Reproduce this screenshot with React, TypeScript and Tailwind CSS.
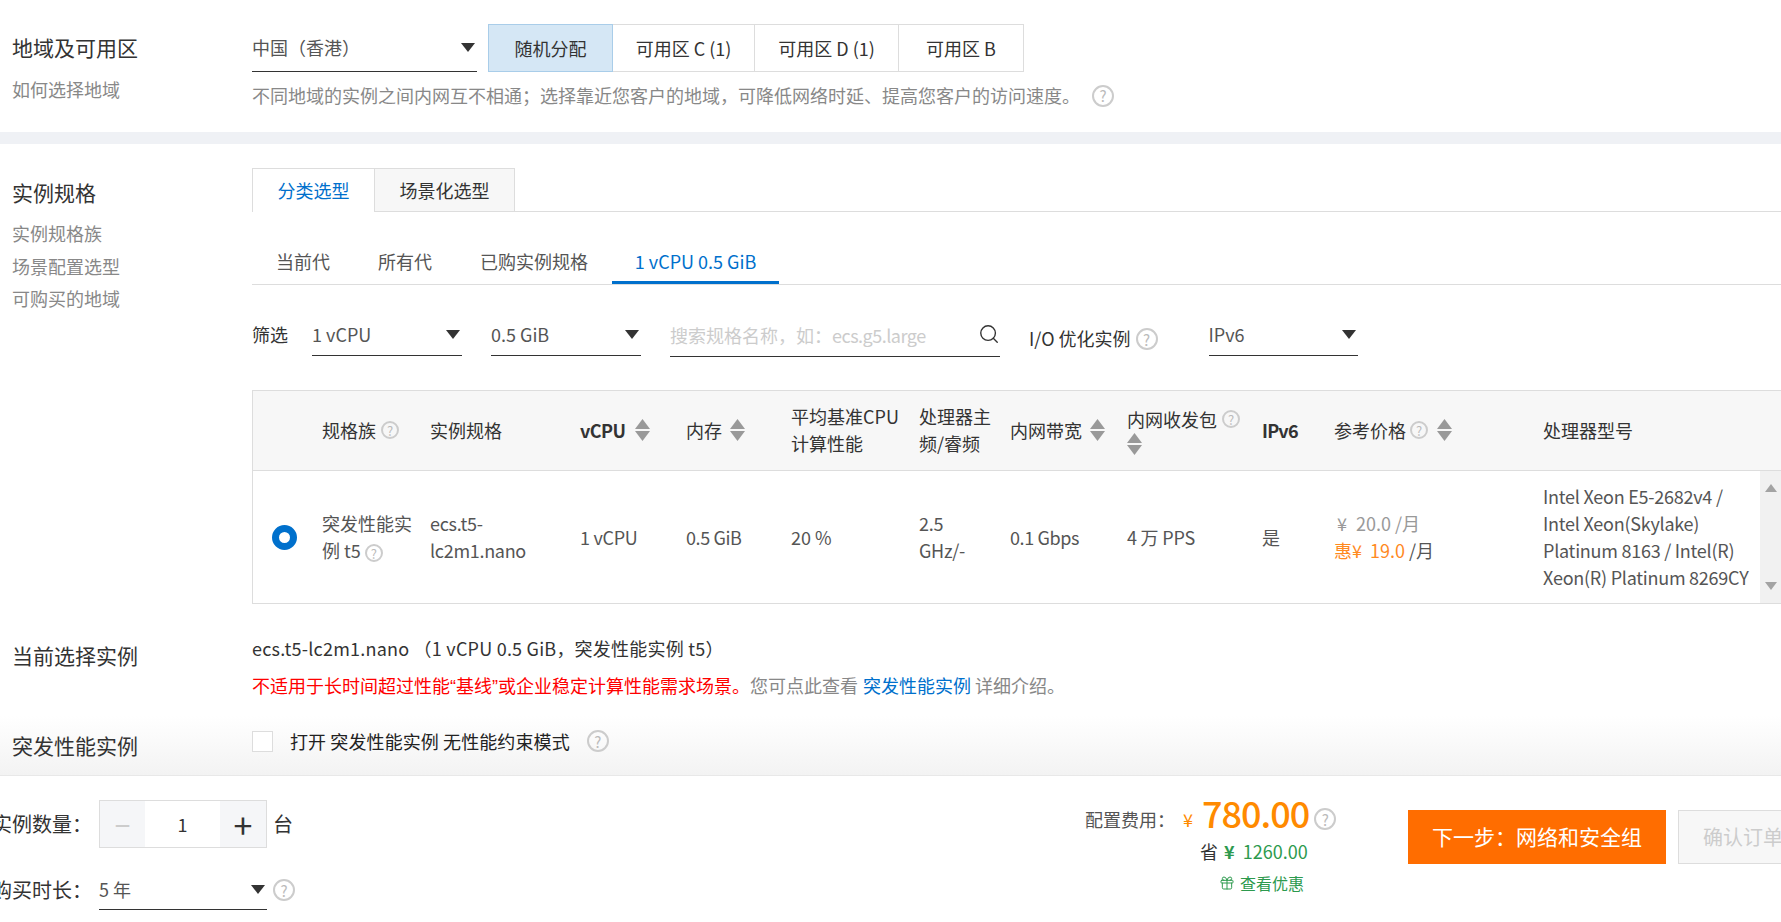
import { Gift, Search } from "lucide-react";

const tableCols =
  "grid grid-cols-[69px_108px_150px_106px_105px_128px_91px_117px_135px_72px_209px_217px_21px]";

function Help({ className = "w-[18px] h-[18px] text-[13px]" }: { className?: string }) {
  return (
    <span
      className={`${className} inline-flex shrink-0 items-center justify-center rounded-full border-2 border-[#ccc] text-[#bbb] leading-none align-middle`}
    >
      ?
    </span>
  );
}

function Caret({ className = "w-[14px] h-[9px]" }: { className?: string }) {
  return (
    <svg viewBox="0 0 14 9" className={`${className} shrink-0 fill-[#333]`}>
      <path d="M0 0h14L7 9z" />
    </svg>
  );
}

function Sort() {
  return (
    <svg viewBox="0 0 15 22" className="w-[15px] h-[22px] shrink-0 fill-[#999]">
      <path d="M7.5 0L15 10H0z" />
      <path d="M0 12h15L7.5 22z" />
    </svg>
  );
}

function Select({ value, className }: { value: string; className: string }) {
  return (
    <div className={`${className} flex items-center justify-between border-b border-[#333] pr-[2px] text-[#555]`}>
      <span>{value}</span>
      <Caret />
    </div>
  );
}

function Zone({ label, className }: { label: string; className: string }) {
  return <div className={`${className} flex items-center justify-center border-y border-r border-[#ddd]`}>{label}</div>;
}

export default function App() {
  return (
    <div className="w-[1781px] h-[922px] overflow-hidden bg-white text-[18px] text-[#333] font-['Noto_Sans_CJK_SC',sans-serif]">
      {/* 地域 */}
      <section className="flex h-[132px] pt-[24px]">
        <div className="w-[252px] pl-[12px]">
          <h2 className="text-[21px] leading-[46px]">地域及可用区</h2>
          <p className="mt-[6px] text-[#888]">如何选择地域</p>
        </div>
        <div>
          <div className="flex h-[48px]">
            <Select value="中国（香港）" className="w-[225px] mr-[11px] pb-[1px]" />
            <div className="flex w-[125px] items-center justify-center border border-[#a9cde9] bg-[#d5e7f5]">随机分配</div>
            <Zone label="可用区 C (1)" className="w-[142px]" />
            <Zone label="可用区 D (1)" className="w-[144px]" />
            <Zone label="可用区 B" className="w-[125px]" />
          </div>
          <div className="mt-[10px] flex items-center text-[#888]">
            不同地域的实例之间内网互不相通；选择靠近您客户的地域，可降低网络时延、提高您客户的访问速度。
            <Help className="ml-[12px] w-[22px] h-[22px] text-[15px]" />
          </div>
        </div>
      </section>
      <div className="h-[12px] bg-[#eff1f5]" />

      {/* 实例规格 */}
      <section className="flex pt-[24px] h-[459px]">
        <div className="w-[252px] shrink-0 pl-[12px]">
          <h2 className="text-[21px] leading-[48px]">实例规格</h2>
          <ul className="mt-[1px] text-[#888] leading-[32.5px]">
            <li>实例规格族</li>
            <li>场景配置选型</li>
            <li>可购买的地域</li>
          </ul>
        </div>
        <div className="flex-1 min-w-0">
          <div className="flex h-[44px] border-b border-[#ddd]">
            <div className="flex w-[123px] h-[44px] items-center justify-center border-x border-t border-[#ddd] bg-white text-[#0070cc]">分类选型</div>
            <div className="flex w-[140px] items-center justify-center border-t border-r border-[#ddd] bg-[#f7f7f7]">场景化选型</div>
          </div>
          <div className="flex h-[73px] items-end border-b border-[#ddd] text-[#555]">
            <div className="flex h-[45px] w-[102px] justify-center pt-[9px]">当前代</div>
            <div className="flex h-[45px] w-[102px] justify-center pt-[9px]">所有代</div>
            <div className="flex h-[45px] w-[156px] justify-center pt-[9px]">已购实例规格</div>
            <div className="flex h-[45px] w-[167px] justify-center border-b-[3px] border-[#0070cc] pt-[9px] text-[#0070cc]">1 vCPU 0.5 GiB</div>
          </div>
          <div className="flex h-[105px] items-start pt-[34px]">
            <span className="w-[60px] leading-[30px]">筛选</span>
            <Select value="1 vCPU" className="w-[150px] h-[37px] mr-[29px] pb-[5px]" />
            <Select value="0.5 GiB" className="w-[150px] h-[37px] mr-[29px] pb-[5px]" />
            <div className="mr-[29px] flex w-[330px] h-[38px] items-center justify-between border-b border-[#333] pb-[5px] text-[#ccc]">
              <span>搜索规格名称，如：<span className="tracking-[-0.5px]">ecs.g5.large</span></span>
              <Search className="w-[22px] h-[22px] text-[#333] mb-[3px]" strokeWidth={1.5} />
            </div>
            <span className="leading-[38px]">I/O 优化实例</span>
            <Help className="ml-[5px] mt-[9px] w-[22px] h-[22px] text-[15px]" />
            <Select value="IPv6" className="ml-[51px] w-[149px] h-[37px] pb-[5px]" />
          </div>
          <div className="border-y border-l border-[#ddd] leading-[27px]">
            <div className={`${tableCols} h-[80px] items-center border-b border-[#ddd] bg-[#f7f7f7] pb-[1px] text-[#333]`}>
              <div />
              <div className="flex items-center gap-[5px]">规格族<Help /></div>
              <div>实例规格</div>
              <div className="flex items-center gap-[10px] font-semibold tracking-[-0.6px]">vCPU<Sort /></div>
              <div className="flex items-center gap-[8px]">内存<Sort /></div>
              <div>平均基准CPU<br />计算性能</div>
              <div>处理器主<br />频/睿频</div>
              <div className="flex items-center gap-[8px]">内网带宽<Sort /></div>
              <div>
                <div className="flex items-center gap-[5px]">内网收发包<Help /></div>
                <Sort />
              </div>
              <div className="font-semibold tracking-[-0.8px]">IPv6</div>
              <div className="flex items-center">参考价格<Help className="ml-[4px] w-[18px] h-[18px] text-[13px]" /><span className="ml-[9px]"><Sort /></span></div>
              <div>处理器型号</div>
              <div />
            </div>
            <div className={`${tableCols} h-[132px] items-center pb-[3px] text-[#555]`}>
              <div className="flex justify-center pr-[7px]">
                <span className="block w-[25px] h-[25px] rounded-full border-[7px] border-[#0070cc] bg-white" />
              </div>
              <div className="pr-[8px]">突发性能实例 t5 <Help /></div>
              <div className="pr-[30px] tracking-[-0.3px]">ecs.t5-lc2m1.nano</div>
              <div className="tracking-[-0.3px]">1 vCPU</div>
              <div className="tracking-[-0.4px]">0.5 GiB</div>
              <div>20 %</div>
              <div className="tracking-[-0.3px]">2.5<br />GHz/-</div>
              <div className="tracking-[-0.4px]">0.1 Gbps</div>
              <div className="tracking-[-0.2px]">4 万 PPS</div>
              <div>是</div>
              <div className="whitespace-nowrap">
                <div className="pl-[3px] text-[#999]">¥<span className="ml-[9px]">20.0 /月</span></div>
                <div><span className="text-[#ff8a1f]">惠¥<span className="ml-[8px]">19.0</span></span> /月</div>
              </div>
              <div className="w-[212px] tracking-[-0.25px]">Intel Xeon E5-2682v4 / Intel Xeon(Skylake) Platinum 8163 / Intel(R) Xeon(R) Platinum 8269CY</div>
              <div className="flex h-[132px] flex-col items-center justify-between self-start bg-[#f1f1f1] py-[13px]">
                <svg viewBox="0 0 12 8" className="w-[12px] h-[8px] fill-[#a3a3a3]"><path d="M6 0l6 8H0z" /></svg>
                <svg viewBox="0 0 12 8" className="w-[12px] h-[8px] fill-[#a3a3a3]"><path d="M0 0h12L6 8z" /></svg>
              </div>
            </div>
          </div>
        </div>
      </section>

      {/* 当前选择实例 */}
      <section className="flex h-[113px] pt-[30px]">
        <div className="w-[252px] shrink-0 pl-[12px] pt-[7px] text-[21px]">当前选择实例</div>
        <div>
          <p className="leading-[30px] tracking-[0.22px]">ecs.t5-lc2m1.nano （1 vCPU 0.5 GiB，突发性能实例 t5）</p>
          <p className="mt-[7px] leading-[30px] text-[#888]">
            <span className="text-[#f00]">不适用于长时间超过性能<span className="font-['Liberation_Sans']">“</span>基线<span className="font-['Liberation_Sans']">”</span>或企业稳定计算性能需求场景。</span>
            您可点此查看 <span className="ml-[1px] text-[#0070cc]">突发性能实例</span> 详细介绍。
          </p>
        </div>
      </section>

      {/* 突发性能实例 */}
      <section className="flex h-[60px] border-b border-[#e8e8e8] bg-gradient-to-b from-white to-[#f3f3f3]">
        <div className="w-[252px] shrink-0 pl-[12px] pt-[14px] text-[21px]">突发性能实例</div>
        <div className="flex h-[40px] items-center pt-[10px]">
          <span className="w-[21px] h-[21px] border border-[#ddd] bg-white" />
          <span className="ml-[17px] text-[#222] tracking-[0.1px]">打开 突发性能实例 无性能约束模式</span>
          <Help className="ml-[17px] w-[22px] h-[22px] text-[15px]" />
        </div>
      </section>

      {/* footer */}
      <footer className="flex justify-between pt-[24px]">
        <div className="text-[20px]">
          <div className="flex h-[48px] items-center">
            <span className="flex w-[99px] shrink-0 justify-end whitespace-nowrap pr-[7px]">实例数量：</span>
            <div className="flex w-[168px] h-[48px] border border-[#ddd] text-[18px]">
              <span className="flex w-[45px] items-center justify-center bg-[#f5f6f8] text-[28px] text-[#ccc]">−</span>
              <span className="flex flex-1 items-center justify-center">1</span>
              <span className="flex w-[46px] items-center justify-center bg-[#f5f6f8] text-[34px]">+</span>
            </div>
            <span className="ml-[6px]">台</span>
          </div>
          <div className="mt-[22px] flex h-[40px] items-center">
            <span className="flex w-[99px] shrink-0 justify-end whitespace-nowrap pr-[7px]">购买时长：</span>
            <Select value="5 年" className="w-[168px] h-[40px] text-[18px]" />
            <Help className="ml-[6px] w-[22px] h-[22px] text-[15px]" />
          </div>
        </div>
        <div className="flex">
          <div className="w-[323px]">
            <div className="flex h-[38px] items-center">
              <span className="w-[98px] text-[#555]">配置费用：</span>
              <span className="text-[#ff8a00]">¥</span>
              <span className="ml-[9px] -mt-[14px] text-[36px] font-medium leading-none tracking-[-1px] text-[#ff8a00]">780.00</span>
              <Help className="ml-[5px] w-[22px] h-[22px] text-[15px]" />
            </div>
            <div className="ml-[115px] whitespace-nowrap">
              省 <span className="ml-[2px] text-[#2d9a4e]"><span className="font-semibold">¥</span><span className="ml-[8px]">1260.00</span></span>
            </div>
            <div className="ml-[134px] mt-[6px] flex items-center gap-[5px] text-[16px] text-[#2d9a4e]">
              <Gift className="w-[16px] h-[16px]" strokeWidth={1.5} />
              <span>查看优惠</span>
            </div>
          </div>
          <div className="mt-[10px] flex h-[54px] w-[258px] items-center justify-center bg-[#ff6d00] text-[21px] text-white">下一步：网络和安全组</div>
          <div className="ml-[12px] mt-[10px] flex h-[54px] w-[103px] items-center overflow-hidden border-y border-l border-[#ddd] bg-[#f7f7f7] pl-[24px] text-[20px] whitespace-nowrap text-[#ccc]">确认订单</div>
        </div>
      </footer>
    </div>
  );
}
